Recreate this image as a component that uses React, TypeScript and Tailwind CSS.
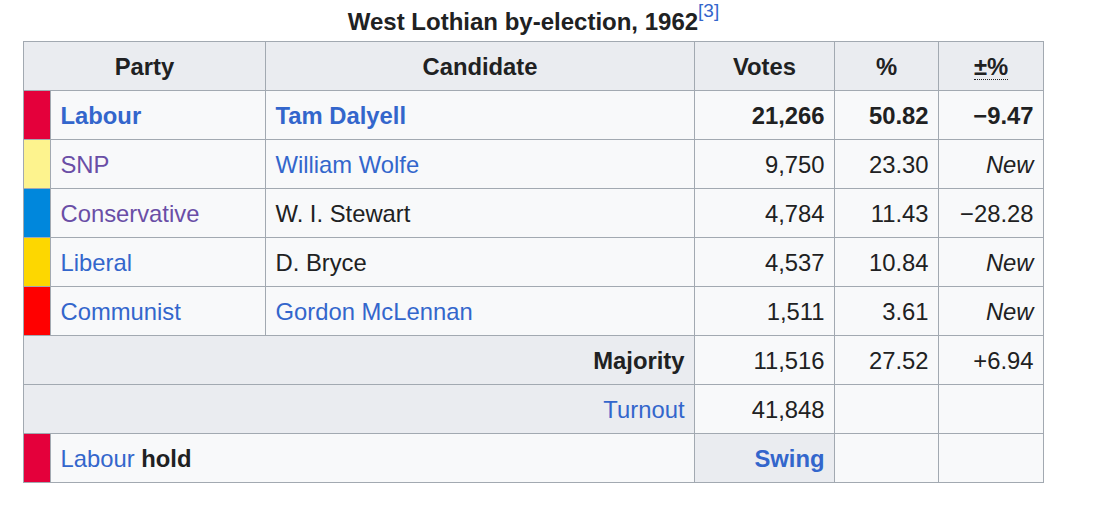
import React from "react";

const LINK = "text-[#3366cc]";
const VISITED = "text-[#6a4ea6]";
const cell = "bg-[#f8f9fa] h-[48px] flex items-center pt-[2px] px-[9.5px] whitespace-nowrap";
const head = "bg-[#eaecf0] h-[48px] flex items-center pt-[2px] px-[9.5px] whitespace-nowrap font-bold";

type Row = {
  color: string;
  party: string;
  partyCls: string;
  cand: string;
  candCls: string;
  votes: string;
  pct: string;
  chg: string;
  italic?: boolean;
  bold?: boolean;
};

const rows: Row[] = [
  { color: "bg-[#e4003b]", party: "Labour", partyCls: LINK, cand: "Tam Dalyell", candCls: LINK, votes: "21,266", pct: "50.82", chg: "\u22129.47", bold: true },
  { color: "bg-[#fdf38e]", party: "SNP", partyCls: VISITED, cand: "William Wolfe", candCls: LINK, votes: "9,750", pct: "23.30", chg: "New", italic: true },
  { color: "bg-[#0087dc]", party: "Conservative", partyCls: VISITED, cand: "W. I. Stewart", candCls: "text-[#202122]", votes: "4,784", pct: "11.43", chg: "\u221228.28" },
  { color: "bg-[#fdd700]", party: "Liberal", partyCls: LINK, cand: "D. Bryce", candCls: "text-[#202122]", votes: "4,537", pct: "10.84", chg: "New", italic: true },
  { color: "bg-[#ff0000]", party: "Communist", partyCls: LINK, cand: "Gordon McLennan", candCls: LINK, votes: "1,511", pct: "3.61", chg: "New", italic: true },
];

export default function App() {
  return (
    <div
      className="min-h-[510px] w-[1113px] bg-white text-[#202122] text-[23.8px] leading-none"
      style={{ fontFamily: '"Liberation Sans", Arial, sans-serif' }}
    >
      <div className="ml-[23px] w-[1021px]">
        <div className="h-[41px] pt-[2px] flex items-center justify-center font-bold text-[24px]">
          <span>
            West Lothian by-election, 1962
            <sup className={`${LINK} font-normal text-[19px] top-[-13px]`}>[3]</sup>
          </span>
        </div>
        <div className="grid grid-cols-[26px_214px_428px_139px_103px_104px] gap-px bg-[#a2a9b1] p-px">
          {/* header */}
          <div className={`${head} col-span-2 justify-center`}>Party</div>
          <div className={`${head} justify-center`}>Candidate</div>
          <div className={`${head} justify-center`}>Votes</div>
          <div className={`${head} justify-center`}>%</div>
          <div className={`${head} justify-center`}>
            <span className="border-b border-dotted border-[#202122] leading-[1.05]">±%</span>
          </div>

          {rows.map((r) => (
            <React.Fragment key={r.party}>
              <div className={`${r.color} h-[48px]`} />
              <div className={`${cell} ${r.partyCls} ${r.bold ? "font-bold" : ""}`}>{r.party}</div>
              <div className={`${cell} ${r.candCls} ${r.bold ? "font-bold" : ""}`}>{r.cand}</div>
              <div className={`${cell} justify-end ${r.bold ? "font-bold" : ""}`}>{r.votes}</div>
              <div className={`${cell} justify-end ${r.bold ? "font-bold" : ""}`}>{r.pct}</div>
              <div className={`${cell} justify-end ${r.bold ? "font-bold" : ""} ${r.italic ? "italic" : ""}`}>{r.chg}</div>
            </React.Fragment>
          ))}

          {/* Majority */}
          <div className={`${head} col-span-3 justify-end`}>Majority</div>
          <div className={`${cell} justify-end`}>11,516</div>
          <div className={`${cell} justify-end`}>27.52</div>
          <div className={`${cell} justify-end`}>+6.94</div>

          {/* Turnout */}
          <div className={`${head} col-span-3 justify-end font-normal ${LINK}`}>
            <span className="font-normal">Turnout</span>
          </div>
          <div className={`${cell} justify-end`}>41,848</div>
          <div className={cell} />
          <div className={cell} />

          {/* Hold */}
          <div className="bg-[#e4003b] h-[48px]" />
          <div className={`${cell} col-span-2`}>
            <span className={LINK}>Labour</span>
            <span className="font-bold">&nbsp;hold</span>
          </div>
          <div className={`${head} justify-end ${LINK}`}>Swing</div>
          <div className={cell} />
          <div className={cell} />
        </div>
      </div>
    </div>
  );
}
